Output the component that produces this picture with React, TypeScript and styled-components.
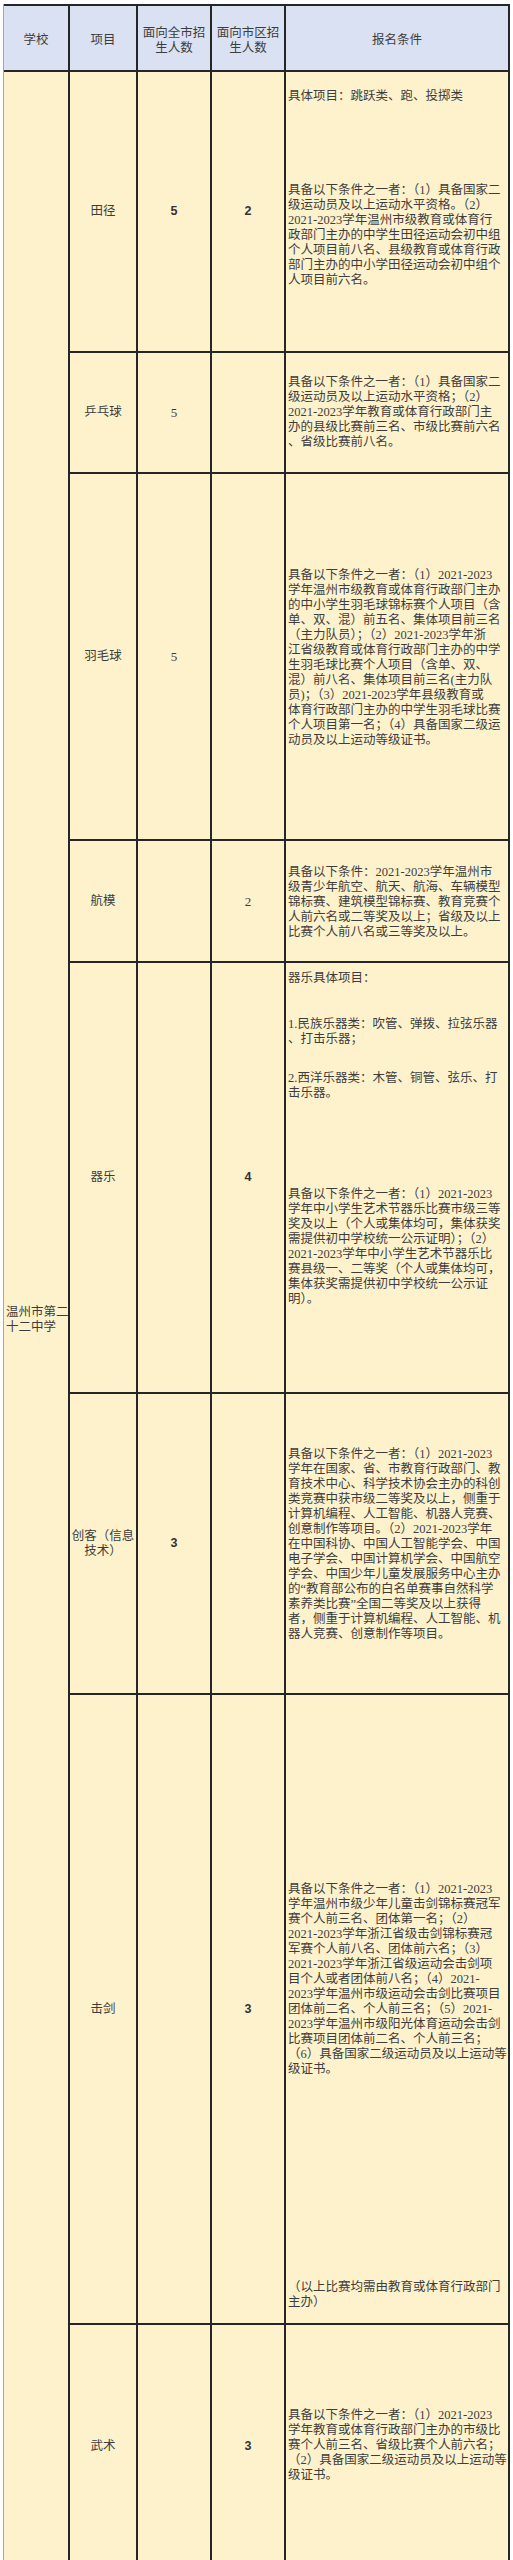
import styled, { createGlobalStyle } from 'styled-components';

type Count = { value: string; bold?: boolean } | null;

type Block = { gap: number; lines: string[] };

type Row = {
  item: string[];
  city: Count;
  district: Count;
  height: number;
  pad: number;
  blocks: Block[];
};

const HEAD_HEIGHT = 64;

const rows: Row[] = [
  {
    item: ['田径'],
    city: { value: '5', bold: true },
    district: { value: '2', bold: true },
    height: 279,
    pad: 17,
    blocks: [
      { gap: 0, lines: ['具体项目：跳跃类、跑、投掷类'] },
      {
        gap: 79,
        lines: [
          '具备以下条件之一者：（1）具备国家二',
          '级运动员及以上运动水平资格。（2）',
          '2021-2023学年温州市级教育或体育行',
          '政部门主办的中学生田径运动会初中组',
          '个人项目前八名、县级教育或体育行政',
          '部门主办的中小学田径运动会初中组个',
          '人项目前六名。',
        ],
      },
    ],
  },
  {
    item: ['乒乓球'],
    city: { value: '5' },
    district: null,
    height: 119,
    pad: 22,
    blocks: [
      {
        gap: 0,
        lines: [
          '具备以下条件之一者：（1）具备国家二',
          '级运动员及以上运动水平资格；（2）',
          '2021-2023学年教育或体育行政部门主',
          '办的县级比赛前三名、市级比赛前六名',
          '、省级比赛前八名。',
        ],
      },
    ],
  },
  {
    item: ['羽毛球'],
    city: { value: '5' },
    district: null,
    height: 365,
    pad: 94,
    blocks: [
      {
        gap: 0,
        lines: [
          '具备以下条件之一者：（1）2021-2023',
          '学年温州市级教育或体育行政部门主办',
          '的中小学生羽毛球锦标赛个人项目（含',
          '单、双、混）前五名、集体项目前三名',
          '（主力队员）；（2）2021-2023学年浙',
          '江省级教育或体育行政部门主办的中学',
          '生羽毛球比赛个人项目（含单、双、',
          '混）前八名、集体项目前三名(主力队',
          '员)；（3）2021-2023学年县级教育或',
          '体育行政部门主办的中学生羽毛球比赛',
          '个人项目第一名；（4）具备国家二级运',
          '动员及以上运动等级证书。',
        ],
      },
    ],
  },
  {
    item: ['航模'],
    city: null,
    district: { value: '2' },
    height: 120,
    pad: 24,
    blocks: [
      {
        gap: 0,
        lines: [
          '具备以下条件：2021-2023学年温州市',
          '级青少年航空、航天、航海、车辆模型',
          '锦标赛、建筑模型锦标赛、教育竞赛个',
          '人前六名或二等奖及以上；省级及以上',
          '比赛个人前八名或三等奖及以上。',
        ],
      },
    ],
  },
  {
    item: ['器乐'],
    city: null,
    district: { value: '4', bold: true },
    height: 429,
    pad: 8,
    blocks: [
      { gap: 0, lines: ['器乐具体项目：'] },
      { gap: 31, lines: ['1.民族乐器类：吹管、弹拨、拉弦乐器', '、打击乐器；'] },
      { gap: 24, lines: ['2.西洋乐器类：木管、铜管、弦乐、打', '击乐器。'] },
      {
        gap: 86,
        lines: [
          '具备以下条件之一者：（1）2021-2023',
          '学年中小学生艺术节器乐比赛市级三等',
          '奖及以上（个人或集体均可，集体获奖',
          '需提供初中学校统一公示证明）；（2）',
          '2021-2023学年中小学生艺术节器乐比',
          '赛县级一、二等奖（个人或集体均可，',
          '集体获奖需提供初中学校统一公示证',
          '明）。',
        ],
      },
    ],
  },
  {
    item: ['创客（信息', '技术）'],
    city: { value: '3', bold: true },
    district: null,
    height: 299,
    pad: 53,
    blocks: [
      {
        gap: 0,
        lines: [
          '具备以下条件之一者：（1）2021-2023',
          '学年在国家、省、市教育行政部门、教',
          '育技术中心、科学技术协会主办的科创',
          '类竞赛中获市级二等奖及以上，侧重于',
          '计算机编程、人工智能、机器人竞赛、',
          '创意制作等项目。（2）2021-2023学年',
          '在中国科协、中国人工智能学会、中国',
          '电子学会、中国计算机学会、中国航空',
          '学会、中国少年儿童发展服务中心主办',
          '的“教育部公布的白名单赛事自然科学',
          '素养类比赛”全国二等奖及以上获得',
          '者，侧重于计算机编程、人工智能、机',
          '器人竞赛、创意制作等项目。',
        ],
      },
    ],
  },
  {
    item: ['击剑'],
    city: null,
    district: { value: '3', bold: true },
    height: 628,
    pad: 187,
    blocks: [
      {
        gap: 0,
        lines: [
          '具备以下条件之一者：（1）2021-2023',
          '学年温州市级少年儿童击剑锦标赛冠军',
          '赛个人前三名、团体第一名；（2）',
          '2021-2023学年浙江省级击剑锦标赛冠',
          '军赛个人前八名、团体前六名；（3）',
          '2021-2023学年浙江省级运动会击剑项',
          '目个人或者团体前八名；（4）2021-',
          '2023学年温州市级运动会击剑比赛项目',
          '团体前二名、个人前三名；（5）2021-',
          '2023学年温州市级阳光体育运动会击剑',
          '比赛项目团体前二名、个人前三名；',
          '（6）具备国家二级运动员及以上运动等',
          '级证书。',
        ],
      },
      { gap: 203, lines: ['（以上比赛均需由教育或体育行政部门', '主办）'] },
    ],
  },
  {
    item: ['武术'],
    city: null,
    district: { value: '3', bold: true },
    height: 242,
    pad: 83,
    blocks: [
      {
        gap: 0,
        lines: [
          '具备以下条件之一者：（1）2021-2023',
          '学年教育或体育行政部门主办的市级比',
          '赛个人前三名、省级比赛个人前六名；',
          '（2）具备国家二级运动员及以上运动等',
          '级证书。',
        ],
      },
    ],
  },
];

const GlobalStyle = createGlobalStyle`
  body {
    margin: 0;
    background: #fff;
    color: #3d3d3d;
    font-family: "Liberation Serif", "Noto Sans CJK SC", serif;
  }
`;

const Page = styled.div`
  box-sizing: border-box;
  height: 2560px;
  overflow: hidden;
  padding: 4px 0 0 3px;
`;

const Sheet = styled.div<{ $rows: string }>`
  display: grid;
  grid-template-columns: 64px 66px 72px 72px 222px;
  grid-template-rows: ${({ $rows }) => $rows};
  gap: 2px;
  width: max-content;
  padding: 2px 2px 2px 0;
  border-left: 1px solid #a8a8a8;
  background: #262626;
  font-size: 12.5px;
  line-height: 15px;
`;

const HeadCell = styled.div`
  display: flex;
  align-items: center;
  justify-content: center;
  padding-top: 5px;
  background: #d9e1f2;
  text-align: center;
`;

const SchoolCell = styled.div`
  grid-column: 1;
  grid-row: 2 / span ${rows.length};
  display: flex;
  align-items: center;
  padding-left: 2px;
  background: #fef2cc;
`;

const ItemCell = styled.div`
  display: flex;
  align-items: center;
  justify-content: center;
  background: #fef2cc;
  text-align: center;
`;

const CountCell = styled.div<{ $bold?: boolean }>`
  display: flex;
  align-items: center;
  justify-content: center;
  background: #fef2cc;
  font-family: ${({ $bold }) => ($bold ? '"Liberation Sans", sans-serif' : '"Liberation Serif", serif')};
  font-size: ${({ $bold }) => ($bold ? '12.5px' : '13px')};
  font-weight: ${({ $bold }) => ($bold ? 700 : 400)};
  color: ${({ $bold }) => ($bold ? '#333' : '#3d3d3d')};
`;

const TermsCell = styled.div<{ $pad: number }>`
  padding: ${({ $pad }) => $pad}px 0 0 2px;
  background: #fef2cc;
`;

const TermsBlock = styled.div<{ $gap: number }>`
  margin-top: ${({ $gap }) => $gap}px;
`;

const Line = styled.span`
  display: block;
  height: 15px;
  white-space: nowrap;
`;

const Lines = ({ lines }: { lines: string[] }) => (
  <div>
    {lines.map((l, i) => (
      <Line key={i}>{l}</Line>
    ))}
  </div>
);

const headers = [['学校'], ['项目'], ['面向全市招', '生人数'], ['面向市区招', '生人数'], ['报名条件']];

export default function App() {
  const template = [HEAD_HEIGHT, ...rows.map((r) => r.height)].map((h) => `${h}px`).join(' ');

  return (
    <Page>
      <GlobalStyle />
      <Sheet $rows={template}>
        <SchoolCell>
          <Lines lines={['温州市第二', '十二中学']} />
        </SchoolCell>
        {headers.map((h, i) => (
          <HeadCell key={i}>
            <Lines lines={h} />
          </HeadCell>
        ))}
        {rows.map((r) => [
          <ItemCell key={r.item[0] + '-item'}>
            <Lines lines={r.item} />
          </ItemCell>,
          <CountCell key={r.item[0] + '-city'} $bold={r.city?.bold}>
            {r.city?.value}
          </CountCell>,
          <CountCell key={r.item[0] + '-district'} $bold={r.district?.bold}>
            {r.district?.value}
          </CountCell>,
          <TermsCell key={r.item[0] + '-terms'} $pad={r.pad}>
            {r.blocks.map((b, i) => (
              <TermsBlock key={i} $gap={b.gap}>
                <Lines lines={b.lines} />
              </TermsBlock>
            ))}
          </TermsCell>,
        ])}
      </Sheet>
    </Page>
  );
}
